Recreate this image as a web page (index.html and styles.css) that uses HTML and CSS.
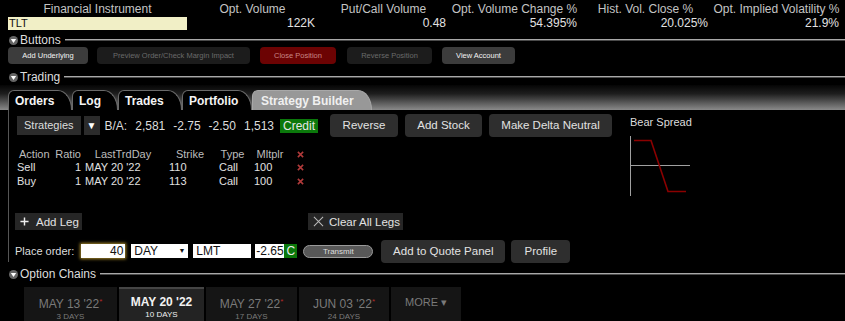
FILE: index.html
```html
<!DOCTYPE html>
<html>
<head>
<title>Strategy Builder</title>
<link rel="stylesheet" href="styles.css">
</head>
<body>

<div class="quote">
  <div class="qh">Financial Instrument</div>
  <div class="qh">Opt. Volume</div>
  <div class="qh">Put/Call Volume</div>
  <div class="qh">Opt. Volume Change %</div>
  <div class="qh">Hist. Vol. Close %</div>
  <div class="qh">Opt. Implied Volatility %</div>
  <div class="sym">TLT</div>
  <div class="qv">122K</div>
  <div class="qv">0.48</div>
  <div class="qv">54.395%</div>
  <div class="qv">20.025%</div>
  <div class="qv">21.9%</div>
</div>

<div class="section">
  <svg viewBox="0 0 9 9"><circle cx="4.5" cy="4.5" r="4.5" fill="#666"/><path d="M1.8 3h5.4L4.5 7z" fill="#fff"/></svg>
  <span>Buttons</span><div class="rule"></div>
</div>
<div class="btnrow">
  <div class="sb on w1">Add Underlying</div>
  <div class="sb off w2">Preview Order/Check Margin Impact</div>
  <div class="sb red w3">Close Position</div>
  <div class="sb off w4">Reverse Position</div>
  <div class="sb on w5">View Account</div>
</div>

<div class="section trading">
  <svg viewBox="0 0 9 9"><circle cx="4.5" cy="4.5" r="4.5" fill="#666"/><path d="M1.8 3h5.4L4.5 7z" fill="#fff"/></svg>
  <span>Trading</span><div class="rule"></div>
</div>
<div class="tabbar">
  <div class="tab t1">Orders</div>
  <div class="tab t2">Log</div>
  <div class="tab t3">Trades</div>
  <div class="tab t4">Portfolio</div>
  <div class="tab t5 active">Strategy Builder</div>
</div>

<div class="panel">
  <div class="leftcol">
    <div class="rowa">
      <div class="strat">Strategies</div>
      <div class="drop">&#9660;</div>
      <div class="ba">B/A:<span>2,581</span><span>-2.75</span><span>-2.50</span><span>1,513</span></div>
      <div class="credit">Credit</div>
      <div class="pb rev">Reverse</div>
      <div class="pb stock">Add Stock</div>
      <div class="pb delta">Make Delta Neutral</div>
    </div>

    <div class="legs">
      <div class="lh first">Action</div>
      <div class="lh ratio">Ratio</div>
      <div class="lh">LastTrdDay</div>
      <div class="lh">Strike</div>
      <div class="lh">Type</div>
      <div class="lh">Mltplr</div>
      <div class="lx"><svg viewBox="0 0 8 8"><path d="M1 1l6 6M7 1L1 7" stroke="#b03a3a" stroke-width="1.8"/></svg></div>

      <div class="lv first">Sell</div>
      <div class="lv ratio">1</div>
      <div class="lv">MAY 20 '22</div>
      <div class="lv">110</div>
      <div class="lv">Call</div>
      <div class="lv">100</div>
      <div class="lx"><svg viewBox="0 0 8 8"><path d="M1 1l6 6M7 1L1 7" stroke="#b03a3a" stroke-width="1.8"/></svg></div>

      <div class="lv first">Buy</div>
      <div class="lv ratio">1</div>
      <div class="lv">MAY 20 '22</div>
      <div class="lv">113</div>
      <div class="lv">Call</div>
      <div class="lv">100</div>
      <div class="lx"><svg viewBox="0 0 8 8"><path d="M1 1l6 6M7 1L1 7" stroke="#b03a3a" stroke-width="1.8"/></svg></div>
    </div>

    <div class="legrow">
      <div class="flat addleg"><svg viewBox="0 0 10 10"><path d="M5 0.5v9M0.5 5h9" stroke="#eee" stroke-width="1.6"/></svg>Add Leg</div>
      <div class="flat clear"><svg viewBox="0 0 12 12"><path d="M1 1l10 10M11 1L1 11" stroke="#bbb" stroke-width="1.1"/></svg>Clear All Legs</div>
    </div>

    <div class="orderrow">
      <span class="plabel">Place order:</span>
      <div class="inp qty">40</div>
      <div class="inp sel">DAY<span class="caret">&#9660;</span></div>
      <div class="inp lmt">LMT</div>
      <div class="inp px">-2.65</div>
      <div class="cbox">C</div>
      <div class="transmit">Transmit</div>
      <div class="pb quote-btn">Add to Quote Panel</div>
      <div class="pb profile">Profile</div>
    </div>
  </div>

  <div class="rightcol">
    <div class="ctitle">Bear Spread</div>
    <svg class="chart" width="62" height="62" viewBox="0 0 62 62">
      <path d="M2.5 2v60M2 31.5h60" stroke="#a0a0a0" stroke-width="1" fill="none"/>
      <path d="M6 6.5h17L40 57.5h18" stroke="#8b0000" stroke-width="1.6" fill="none"/>
    </svg>
  </div>
</div>

<div class="section chains">
  <svg viewBox="0 0 9 9"><circle cx="4.5" cy="4.5" r="4.5" fill="#666"/><path d="M1.8 3h5.4L4.5 7z" fill="#fff"/></svg>
  <span>Option Chains</span><div class="rule"></div>
</div>
<div class="expiries">
  <div class="exp e1"><div class="ed">MAY 13 '22<sup>*</sup></div><div class="es">3 DAYS</div></div>
  <div class="exp e2 cur"><div class="ed">MAY 20 '22</div><div class="es">10 DAYS</div></div>
  <div class="exp e3"><div class="ed">MAY 27 '22<sup>*</sup></div><div class="es">17 DAYS</div></div>
  <div class="exp e4"><div class="ed">JUN 03 '22<sup>*</sup></div><div class="es">24 DAYS</div></div>
  <div class="exp more">MORE &#9662;</div>
</div>

</body>
</html>
```

FILE: styles.css
```css
body { margin:0; background:#000; color:#ddd; font-family:"Liberation Sans", Arial, sans-serif; font-size:11px; overflow:hidden; }

/* quote line */
.quote { display:grid; grid-template-columns:179px repeat(5,131px); padding:2px 0 0 8px; }
.qh { text-align:center; font-size:12px; line-height:15px; color:#c4c4c4; }
.sym { background:#f1efc6; color:#111; font-size:11px; line-height:13px; padding-left:1px; }
.qv { text-align:right; font-size:12px; line-height:13px; padding-right:3px; color:#e2e2e2; }

/* collapsible section headers */
.section { display:flex; align-items:center; height:14px; margin-top:3px; padding-left:9px; font-size:12px; color:#ddd; }
.section svg { width:9px; height:9px; margin-right:2px; }
.section .rule { flex:1; margin-left:4px; border-top:1px solid #a8a8a8; border-bottom:1px solid #4a4a4a; }
.trading { margin-top:6px; }
.chains { margin-top:5px; }

/* small buttons row */
.btnrow { display:flex; padding-left:8px; height:17px; }
.sb { height:17px; line-height:17px; border-radius:4px; font-size:7.5px; text-align:center; margin-right:10px; }
.sb.on { background:#3c3c3c; color:#f2f2f2; }
.sb.off { background:#1c1c1c; color:#6a6a6a; }
.sb.red { background:#6c0303; color:#c98686; }
.w1 { width:80px; margin-right:9px; }
.w2 { width:153px; }
.w3 { width:76px; margin-right:11px; }
.w4 { width:85px; }
.w5 { width:73px; }

/* tabs */
.tabbar { display:flex; align-items:flex-end; height:25px; margin-top:1px; padding-left:8px; background:linear-gradient(to bottom, #050505 0%, #1e1e1e 35%, #8a8a8a 100%); }
.tab { height:20px; line-height:20px; padding-left:6px; box-sizing:border-box; font-size:12px; font-weight:bold; color:#f4f4f4; background:#000; border:1px solid #6a6a6a; border-bottom:none; border-radius:6px 14px 0 0 / 6px 20px 0 0; }
.t1 { width:64px; }
.t2 { width:46px; }
.t3 { width:64px; }
.t4 { width:70px; }
.t5 { width:120px; padding-left:8px; }
.tab.active { background:#989898; border-color:#a8a8a8; color:#f0f0f0; }

/* strategy builder panel */
.panel { display:flex; height:152px; margin-left:8px; padding-left:6px; border-left:1px solid #555; }
.leftcol { width:600px; }
.rightcol { margin-left:15px; padding-top:6px; }

.rowa { display:flex; align-items:center; height:23px; margin-top:4px; }
.strat { height:19px; line-height:19px; margin-left:2px; padding:0 7px; background:#2b2b2b; font-size:11px; color:#ddd; }
.drop { width:16px; height:19px; line-height:19px; margin-left:3px; background:#2b2b2b; text-align:center; font-size:10px; color:#fff; }
.ba { margin-left:5px; font-size:12px; color:#ddd; }
.ba span { margin-left:8px; }
.credit { margin-left:6px; height:14px; line-height:14px; padding:0 3px; background:#0b780b; font-size:12px; color:#e6e6e6; }
.pb { height:23px; line-height:23px; border-radius:4px; background:#2e2e2e; text-align:center; font-size:11.5px; color:#e2e2e2; }
.rev { width:68px; margin-left:12px; }
.stock { width:77px; margin-left:7px; }
.delta { width:123px; margin-left:7px; }

.legs { display:grid; grid-template-columns:38px 26px 84px 50px 35px 40px 20px; margin:11px 0 0 2px; width:293px; }
.lh { text-align:center; line-height:12px; color:#bdbdbd; }
.lv { padding-left:4px; line-height:14px; color:#e0e0e0; }
.legs .first { text-align:left; padding-left:0; }
.lh.first { padding-left:2px; }
.legs .ratio { text-align:right; padding-left:0; }
.lx { display:flex; align-items:center; justify-content:center; }
.lx svg { width:7px; height:7px; }

.legrow { display:flex; justify-content:space-between; width:388px; margin-top:25px; }
.flat { display:flex; align-items:center; height:17px; background:#262626; font-size:11.5px; color:#e2e2e2; }
.addleg { padding:0 3px 0 5px; }
.addleg svg { width:9px; height:9px; margin-right:7px; }
.clear { padding:0 3px 0 5px; }
.clear svg { width:11px; height:11px; margin-right:5px; }

.orderrow { display:flex; align-items:center; height:22px; margin-top:10px; }
.plabel { font-size:11px; color:#ddd; }
.inp { height:14px; line-height:14px; background:#fff; color:#111; font-size:12px; box-sizing:border-box; }
.qty { width:44px; margin-left:7px; text-align:right; padding-right:2px; box-shadow:0 0 3px 1px #a88a2a; }
.sel { display:flex; justify-content:space-between; width:57px; margin-left:6px; padding:0 3px; }
.caret { font-size:7px; }
.lmt { width:58px; margin-left:5px; padding-left:3px; }
.px { width:29px; margin-left:4px; padding-left:1px; }
.cbox { width:13px; height:14px; line-height:14px; background:#0b780b; color:#eee; text-align:center; font-size:12px; }
.transmit { width:70px; height:13px; line-height:12px; margin-left:6px; box-sizing:border-box; border:1px solid #9a9a9a; border-radius:7px; background:#585858; text-align:center; font-size:8px; color:#ddd; }
.quote-btn { width:124px; margin-left:8px; }
.profile { width:59px; margin-left:6px; }

.ctitle { line-height:12px; color:#ddd; }
.chart { display:block; margin:6px 0 0 -2px; }

/* option chain expiries */
.expiries { display:flex; margin:6px 0 0 24px; }
.exp { height:34px; margin-right:2px; background:#151515; text-align:center; color:#7a7a7a; box-sizing:border-box; padding-top:8px; }
.ed { font-size:12px; line-height:14px; }
.ed sup { color:#b02a2a; font-size:8px; vertical-align:4px; }
.es { font-size:8px; line-height:11px; }
.e1 { width:93px; }
.e2 { width:85px; }
.e3 { width:91px; }
.e4 { width:90px; }
.more { width:70px; line-height:14px; font-size:11px; }
.cur { background:#232323; border-top:2px solid #454545; padding-top:6px; color:#f2f2f2; }
.cur .ed { font-weight:bold; }
```
